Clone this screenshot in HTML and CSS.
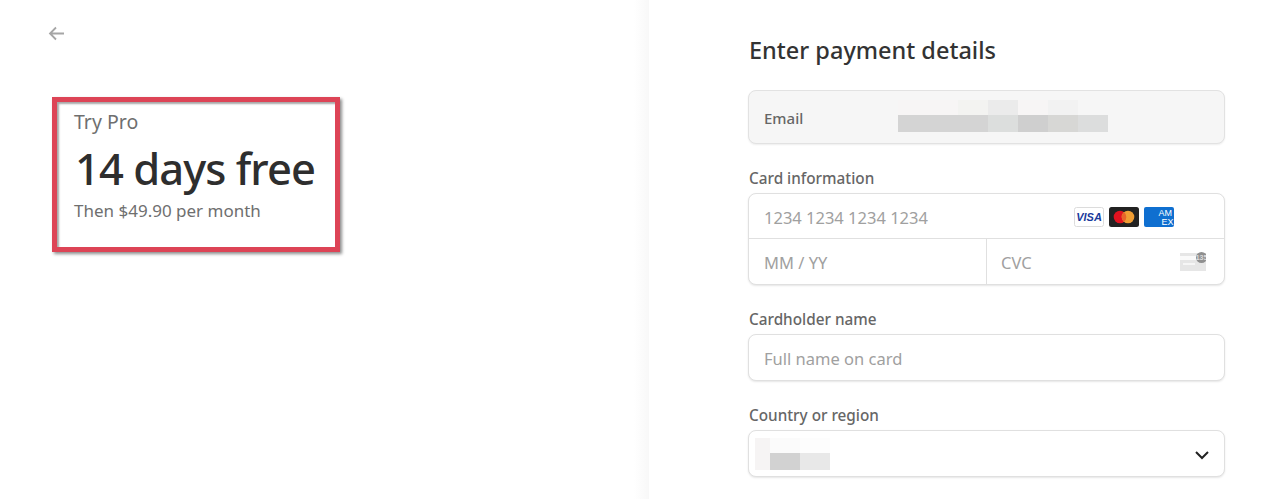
FILE: index.html
```html
<!DOCTYPE html>
<html lang="en">
<head>
    <meta charset="UTF-8">
    <meta name="viewport" content="width=device-width, initial-scale=1.0">
    <title>Try Pro - Checkout</title>
    <link rel="stylesheet" href="styles.css">
</head>
<body>
    <div class="page">
        <section class="summary">
            <a class="back-link" href="#" aria-label="Back">
                <svg width="18" height="16" viewBox="0 0 18 16" fill="none" stroke="#a6a6a6" stroke-width="1.8">
                    <path d="M16 8.5H2M8 2.5l-6 6 6 6"/>
                </svg>
            </a>
            <div class="offer">
                <div class="offer-name">Try Pro</div>
                <div class="offer-price">14 days free</div>
                <div class="offer-then">Then $49.90 per month</div>
            </div>
        </section>

        <section class="payment">
            <h2>Enter payment details</h2>

            <div class="email-row">
                <span class="email-label">Email</span>
                <div class="blur blur-email">
                    <i class="c1"></i><i class="c1"></i><i class="c2"></i><i class="c3"></i><i class="c1"></i><i class="c4"></i><i class="c0"></i>
                    <i class="c5"></i><i class="c5"></i><i class="c5"></i><i class="c6"></i><i class="c7"></i><i class="c8"></i><i class="c9"></i>
                </div>
            </div>

            <div class="form-group">
                <label>Card information</label>
                <div class="card-box">
                    <div class="card-number">
                        <span class="placeholder">1234 1234 1234 1234</span>
                        <div class="card-brands">
                            <svg width="30" height="20" viewBox="0 0 30 20">
                                <rect x=".5" y=".5" width="29" height="19" rx="2" fill="#fff" stroke="#dcdcdc"/>
                                <text x="15" y="14" text-anchor="middle" class="visa-text">VISA</text>
                            </svg>
                            <svg width="30" height="20" viewBox="0 0 30 20">
                                <rect width="30" height="20" rx="2.5" fill="#222"/>
                                <circle cx="11" cy="10" r="6.3" fill="#e2121f"/>
                                <circle cx="19" cy="10" r="6.3" fill="#f09d33"/>
                                <path d="M15 5.1a6.3 6.3 0 0 1 0 9.8a6.3 6.3 0 0 1 0-9.8z" fill="#e8642a"/>
                            </svg>
                            <svg width="30" height="20" viewBox="0 0 30 20">
                                <rect width="30" height="20" rx="2" fill="#0f6fd0"/>
                                <text x="14.5" y="9" class="amex-text">AM</text>
                                <text x="17.5" y="18" class="amex-text">EX</text>
                            </svg>
                        </div>
                    </div>
                    <div class="card-extra">
                        <div class="card-expiry"><span class="placeholder">MM / YY</span></div>
                        <div class="card-cvc">
                            <span class="placeholder">CVC</span>
                            <svg width="26" height="19" viewBox="0 0 26 19">
                                <rect y="1" width="26" height="18" fill="#e6e6e6"/>
                                <rect y="4" width="26" height="4" fill="#fafafa"/>
                                <rect x="3" y="11" width="12" height="2" fill="#f6f6f6"/>
                                <circle cx="21.5" cy="5.5" r="5.5" fill="#8f8f8f"/>
                                <text x="21.5" y="8" text-anchor="middle" class="cvc-text">135</text>
                            </svg>
                        </div>
                    </div>
                </div>
            </div>

            <div class="form-group">
                <label>Cardholder name</label>
                <div class="field"><span class="placeholder">Full name on card</span></div>
            </div>

            <div class="form-group">
                <label>Country or region</label>
                <div class="field field-select">
                    <div class="blur blur-country">
                        <i class="k0"></i><i class="k1"></i><i class="k2"></i>
                        <i class="k0"></i><i class="k3"></i><i class="k4"></i>
                    </div>
                    <svg width="14" height="9" viewBox="0 0 14 9" fill="none" stroke="#222" stroke-width="2">
                        <path d="M1 1l6 6 6-6"/>
                    </svg>
                </div>
            </div>
        </section>
    </div>
</body>
</html>
```

FILE: styles.css
```css
html, body {
    height: 100%;
}
body {
    font-family: 'Noto Sans', 'Open Sans', sans-serif;
    margin: 0;
    background-color: white;
    color: #333;
    overflow: hidden;
}

.page {
    display: flex;
    height: 499px;
}

/* Left side */
.summary {
    width: 649px;
    flex-shrink: 0;
    box-sizing: border-box;
    padding: 25px 0 0 48px;
    background: linear-gradient(to right, white 634px, #f8f8f8 649px);
}
.back-link {
    display: block;
    height: 16px;
    line-height: 0;
}

.offer {
    box-sizing: border-box;
    width: 288px;
    height: 155px;
    margin: 56px 0 0 4px;
    padding: 7px 0 0 17px;
    border: 5px solid #dd4456;
    box-shadow: 2px 2px 3px rgba(0, 0, 0, 0.45), inset 2px 2px 2px rgba(0, 0, 0, 0.35);
}
.offer-name {
    font-size: 19.5px;
    line-height: 26px;
    color: #6f6f6f;
}
.offer-price {
    font-size: 43.5px;
    line-height: 58px;
    letter-spacing: -0.95px;
    font-weight: 500;
    color: #2e2e2e;
    margin: 4px 0 2px 1px;
}
.offer-then {
    font-size: 17px;
    line-height: 24px;
    color: #6f6f6f;
}

/* Right side */
.payment {
    width: 477px;
    margin-left: 99px;
    padding-top: 35px;
}
.payment h2 {
    font-size: 23.5px;
    line-height: 30px;
    font-weight: 500;
    color: #333;
    margin: 0 0 25px;
    padding-left: 1px;
}

.email-row {
    display: flex;
    align-items: center;
    box-sizing: border-box;
    height: 54px;
    padding-left: 15px;
    background-color: #f6f6f6;
    border: 1px solid #e2e2e2;
    border-radius: 8px;
    box-shadow: 0 1px 2px rgba(0, 0, 0, 0.07);
}
.email-label {
    width: 134px;
    padding-top: 2px;
    font-size: 15px;
    font-weight: 500;
    color: #666;
}

.blur {
    display: grid;
    flex-shrink: 0;
}
.blur i {
    display: block;
}
.blur-email {
    grid-template-columns: repeat(7, 30px);
    grid-template-rows: 15px 17px;
    margin-bottom: 3px;
}
.blur-country {
    grid-template-columns: 15px 30px 30px;
    grid-template-rows: 15px 17px;
}
.c0 { background: transparent; }
.c1 { background: #f7f5f5; }
.c2 { background: #f3f3f1; }
.c3 { background: #ebebeb; }
.c4 { background: #f2f2f2; }
.c5 { background: #d4d4d4; }
.c6 { background: #dcdedd; }
.c7 { background: #cfcfcf; }
.c8 { background: #d7d7d5; }
.c9 { background: #dcdddd; }
.k0 { background: #f6f4f4; }
.k1 { background: #fbfbfb; }
.k2 { background: #fdfdfd; }
.k3 { background: #d2d2d2; }
.k4 { background: #e8e8e8; }

.form-group {
    margin-top: 25px;
}
.form-group label {
    display: block;
    font-size: 15.3px;
    line-height: 19px;
    font-weight: 500;
    color: #666;
    margin-bottom: 5px;
    padding-left: 1px;
}

.placeholder {
    font-size: 16.5px;
    color: #a0a0a0;
}
.card-extra .placeholder,
.field .placeholder {
    padding-top: 2px;
}

.field,
.card-box {
    box-sizing: border-box;
    background-color: white;
    border: 1px solid #e0e0e0;
    border-radius: 8px;
    box-shadow: 0 1px 2px rgba(0, 0, 0, 0.1);
}
.field {
    display: flex;
    align-items: center;
    height: 47px;
    padding-left: 15px;
}
.field-select {
    justify-content: space-between;
    padding: 0 15px 0 6px;
}
.field-select svg {
    margin-top: 3px;
}

.card-box {
    height: 92px;
}
.card-number {
    display: flex;
    align-items: center;
    justify-content: space-between;
    box-sizing: border-box;
    height: 45px;
    padding: 2px 50px 0 15px;
    border-bottom: 1px solid #e0e0e0;
}
.card-brands {
    display: flex;
    gap: 5px;
}
.card-extra {
    display: flex;
    height: 45px;
}
.card-expiry {
    display: flex;
    align-items: center;
    box-sizing: border-box;
    width: 238px;
    padding-left: 15px;
    border-right: 1px solid #e0e0e0;
}
.card-cvc {
    flex: 1;
    display: flex;
    align-items: center;
    justify-content: space-between;
    padding: 0 18px 0 14px;
}

/* small labels on the card icons */
.visa-text {
    font-family: 'Liberation Sans', sans-serif;
    font-size: 11px;
    font-weight: 700;
    font-style: italic;
    fill: #1a3a9c;
}
.amex-text {
    font-family: 'Liberation Sans', sans-serif;
    font-size: 9px;
    fill: white;
}
.cvc-text {
    font-family: 'Liberation Sans', sans-serif;
    font-size: 7px;
    font-weight: 700;
    fill: #ddd;
}
```
